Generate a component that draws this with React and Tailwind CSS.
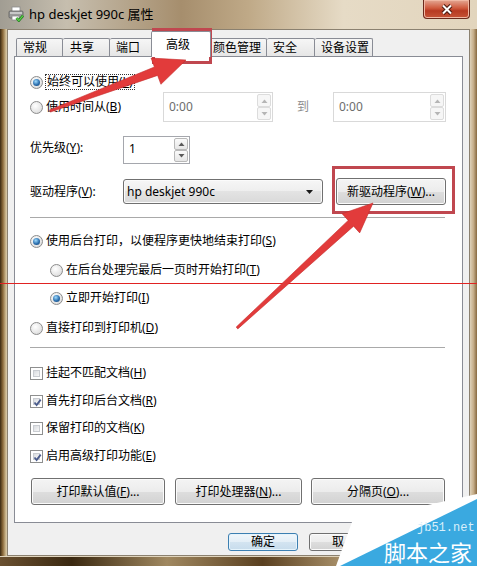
function Radio({ checked }) {
  return (
    <span className="w-[13px] h-[13px] shrink-0 rounded-full border border-[#8c8c8c] bg-[radial-gradient(circle_at_40%_35%,#ffffff,#e6e6e6_60%,#cfcfcf)] flex items-center justify-center">
      {checked && (
        <span className="w-[7px] h-[7px] rounded-full bg-[radial-gradient(circle_at_40%_35%,#9fdcff,#2c6fae_55%,#123f6e)]"></span>
      )}
    </span>
  );
}

function Check({ checked }) {
  return (
    <span className="relative w-[13px] h-[13px] shrink-0 border border-[#8e8f8f] bg-white p-[2px]">
      <span className="block w-full h-full border border-[#c9ccd1] bg-[linear-gradient(135deg,#d9dce0,#f7f7f7)]"></span>
      {checked && (
        <svg className="absolute left-[1px] top-[1px]" width="11" height="11" viewBox="0 0 11 11">
          <path d="M2.5 5.5 L4.6 8 L8.7 2.6" fill="none" stroke="#4a5b8c" strokeWidth="1.8" />
        </svg>
      )}
    </span>
  );
}

function SpinBtn({ up, disabled }) {
  return (
    <span
      className={
        "flex-1 flex items-center justify-center border rounded-[2px] " +
        (disabled ? "border-[#dcdcdc] bg-[#f6f6f6]" : "border-[#b8b8b8] bg-[linear-gradient(#fafafa,#e6e6e6)]")
      }
    >
      <svg width="7" height="4" viewBox="0 0 7 4">
        <path d={up ? "M0.5 4 L3.5 0.5 L6.5 4Z" : "M0.5 0 L3.5 3.5 L6.5 0Z"} fill={disabled ? "#b5b5b5" : "#5a5a5a"} />
      </svg>
    </span>
  );
}

function Spin({ value, disabled, className, textClass }) {
  return (
    <div
      className={
        "flex bg-white border " +
        (disabled ? "border-[#d9d9d9] text-[#6d6d6d] " : "border-[#a5a7ad] text-black ") +
        className
      }
    >
      <span className={"flex-1 pl-[5px] flex " + textClass}>{value}</span>
      <div className="w-[14px] flex flex-col py-[1px] mr-[1px]">
        <SpinBtn up disabled={disabled} />
        <SpinBtn disabled={disabled} />
      </div>
    </div>
  );
}

function Btn({ children, className }) {
  return (
    <div
      className={
        "flex items-center justify-center border border-[#707070] rounded-[3px] bg-[linear-gradient(#f4f4f4,#ececec_50%,#dedede_50%,#d2d2d2)] shadow-[inset_0_0_0_1px_#fbfbfb] " +
        className
      }
    >
      {children}
    </div>
  );
}

function PrinterIcon() {
  return (
    <svg width="16" height="16" viewBox="0 0 16 16">
      <rect x="4" y="1" width="8" height="5" fill="#fff" stroke="#8a8a8a" strokeWidth="0.8" />
      <rect x="1" y="5" width="14" height="7" rx="1.2" fill="#9a9a9a" stroke="#5e5e5e" strokeWidth="0.8" />
      <rect x="2" y="6" width="12" height="2" fill="#c8c8c8" />
      <rect x="4" y="10" width="7" height="4" fill="#fff" stroke="#8a8a8a" strokeWidth="0.8" />
      <path d="M8.5 12 L10.8 14.6 L15 9.6" fill="none" stroke="#1f7a1f" strokeWidth="2.6" />
      <path d="M8.5 12 L10.8 14.6 L15 9.6" fill="none" stroke="#5fd14a" strokeWidth="1.3" />
    </svg>
  );
}

export default function App() {
  return (
    <div className="relative w-[477px] h-[566px] overflow-hidden flex flex-col bg-[#d6c6a6] text-black text-[12px] leading-[16px] font-['Noto_Sans','Noto_Sans_CJK_SC',sans-serif]">
      {/* title bar */}
      <div className="h-[29px] shrink-0 flex items-start bg-[linear-gradient(90deg,#a19d93_0%,#c6beae_14%,#a68e6d_38%,#bfa987_52%,#e6dbc6_72%,#e2d5bd_100%)]">
        <div className="h-[28px] flex items-center pl-[8px]">
          <PrinterIcon />
          <span className="ml-[5px] text-[13px] text-black">hp deskjet 990c 属性</span>
        </div>
        <div className="ml-auto mr-[7px] w-[47px] h-[19px] flex items-center justify-center rounded-b-[4px] border border-t-0 border-[#6b2a1c] bg-[linear-gradient(#e4a894,#cf5a3e_45%,#b73a22_60%,#c65437)] shadow-[inset_0_0_0_1px_#f0b8a4]">
          <svg width="14" height="11" viewBox="0 0 14 11">
            <path d="M3 1.5 L11 9.5 M11 1.5 L3 9.5" stroke="#4a1a10" strokeWidth="4" />
            <path d="M3 1.5 L11 9.5 M11 1.5 L3 9.5" stroke="#ffffff" strokeWidth="2" />
          </svg>
        </div>
      </div>

      <div className="flex flex-1">
        {/* left frame */}
        <div className="w-[7px] bg-[linear-gradient(90deg,#3a2911,#8a693a_40%,#c8b389_80%,#d9cbae)]"></div>

        {/* client area */}
        <div className="flex-1 flex flex-col bg-[#f0f0f0] border border-[#8b8170] px-[6px]">
          {/* tabs */}
          <div className="h-[26px] flex items-end pl-[2px]">
            <div className="w-[47px] h-[18px] pl-[6px] pt-[1px] border border-b-0 border-[#898c95] rounded-t-[2px] bg-[linear-gradient(#f6f6f6,#e6e6e6)]">常规</div>
            <div className="w-[47px] h-[18px] pl-[7px] pt-[1px] border border-l-0 border-b-0 border-[#898c95] rounded-t-[2px] bg-[linear-gradient(#f6f6f6,#e6e6e6)]">共享</div>
            <div className="w-[43px] h-[18px] pl-[6px] pt-[1px] border border-l-0 border-b-0 border-[#898c95] rounded-t-[2px] bg-[linear-gradient(#f6f6f6,#e6e6e6)]">端口</div>
            <div className="relative z-10 w-[60px] -mx-[2px] -mb-px h-[26px] pl-[14px] pt-[5px] border border-b-0 border-[#898c95] rounded-t-[2px] bg-white">高级</div>
            <div className="w-[58px] h-[18px] pl-[4px] pt-[1px] border border-l-0 border-b-0 border-[#898c95] rounded-t-[2px] bg-[linear-gradient(#f6f6f6,#e6e6e6)]">颜色管理</div>
            <div className="w-[48px] h-[18px] pl-[6px] pt-[1px] border border-l-0 border-b-0 border-[#898c95] rounded-t-[2px] bg-[linear-gradient(#f6f6f6,#e6e6e6)]">安全</div>
            <div className="w-[58px] h-[18px] pl-[6px] pt-[1px] border border-l-0 border-b-0 border-[#898c95] rounded-t-[2px] bg-[linear-gradient(#f6f6f6,#e6e6e6)]">设备设置</div>
          </div>

          {/* tab panel */}
          <div className="h-[467px] shrink-0 border border-[#898c95] bg-white pl-[15px] flex flex-col">
            <div className="mt-[17px] h-[16px] flex items-center">
              <Radio checked />
              <span className="ml-[2px] border border-dotted border-[#333] px-[1px] leading-[14px]">始终可以使用(<u>L</u>)</span>
            </div>

            <div className="mt-[2px] h-[30px] flex items-center">
              <div className="w-[133px] flex items-center">
                <Radio />
                <span className="ml-[3px]">使用时间从(<u>B</u>)</span>
              </div>
              <Spin disabled value="0:00" className="w-[110px] h-[30px]" textClass="items-center" />
              <span className="ml-[24px] w-[12px] text-[#8d8d8d]">到</span>
              <Spin disabled value="0:00" className="ml-[24px] w-[113px] h-[30px]" textClass="items-center" />
            </div>

            <div className="mt-[14px] h-[28px] flex items-center">
              <span className="w-[93px] pb-[4px]">优先级(<u>Y</u>):</span>
              <Spin value="1" className="w-[67px] h-[28px]" textClass="items-start pt-[4px]" />
            </div>

            <div className="mt-[15px] h-[25px] flex items-center">
              <span className="w-[93px]">驱动程序(<u>V</u>):</span>
              <div className="w-[200px] h-[25px] flex items-center justify-between pl-[3px] pr-[9px] border border-[#707070] rounded-[3px] bg-[linear-gradient(#f6f6f6,#eeeeee_50%,#e3e3e3_50%,#d9d9d9)] shadow-[inset_0_0_0_1px_#fbfbfb]">
                <span>hp deskjet 990c</span>
                <svg width="7" height="4" viewBox="0 0 7 4">
                  <path d="M0 0 L7 0 L3.5 4Z" fill="#1a1a1a" />
                </svg>
              </div>
              <Btn className="ml-[13px] w-[110px] h-[27px]">新驱动程序(<u>W</u>)...</Btn>
            </div>

            <div className="mt-[13px] h-px w-[415px] bg-[#a9a9a9]"></div>

            <div className="mt-[15px] h-[16px] flex items-center">
              <Radio checked />
              <span className="ml-[3px]">使用后台打印，以便程序更快地结束打印(<u>S</u>)</span>
            </div>
            <div className="mt-[13px] h-[16px] flex items-center pl-[20px]">
              <Radio />
              <span className="ml-[3px]">在后台处理完最后一页时开始打印(<u>T</u>)</span>
            </div>
            <div className="mt-[12px] h-[16px] flex items-center pl-[20px]">
              <Radio checked />
              <span className="ml-[3px]">立即开始打印(<u>I</u>)</span>
            </div>
            <div className="mt-[14px] h-[16px] flex items-center">
              <Radio />
              <span className="ml-[3px]">直接打印到打印机(<u>D</u>)</span>
            </div>

            <div className="mt-[11px] h-px w-[415px] bg-[#a9a9a9]"></div>

            <div className="mt-[17px] h-[16px] flex items-center">
              <Check />
              <span className="ml-[3px]">挂起不匹配文档(<u>H</u>)</span>
            </div>
            <div className="mt-[12px] h-[16px] flex items-center">
              <Check checked />
              <span className="ml-[3px]">首先打印后台文档(<u>R</u>)</span>
            </div>
            <div className="mt-[11px] h-[16px] flex items-center">
              <Check />
              <span className="ml-[3px]">保留打印的文档(<u>K</u>)</span>
            </div>
            <div className="mt-[12px] h-[16px] flex items-center">
              <Check checked />
              <span className="ml-[3px]">启用高级打印功能(<u>E</u>)</span>
            </div>

            <div className="mt-[14px] h-[27px] flex">
              <Btn className="ml-[1px] w-[134px] h-[27px]">打印默认值(<u>F</u>)...</Btn>
              <Btn className="ml-[10px] w-[127px] h-[27px]">打印处理器(<u>N</u>)...</Btn>
              <Btn className="ml-[9px] w-[134px] h-[27px]">分隔页(<u>O</u>)...</Btn>
            </div>
          </div>

          {/* dialog buttons */}
          <div className="mt-[10px] h-[18px] flex">
            <div className="ml-[214px] w-[70px] h-[18px] flex items-center justify-center border border-[#3c7fb1] rounded-[3px] bg-[linear-gradient(#f1f7fb,#e3eef7_50%,#d3e4f1_50%,#c7dcec)] shadow-[inset_0_0_0_1px_#e6f4fc]">确定</div>
            <Btn className="ml-[11px] w-[70px] h-[18px] justify-start pl-[22px]">取</Btn>
          </div>
        </div>

        {/* right frame */}
        <div className="w-[7px] bg-[linear-gradient(90deg,#ded2ba,#c5ad89_50%,#86683f)]"></div>
      </div>

      {/* bottom frame */}
      <div className="h-[10px] shrink-0 border-t border-[#e0d4bc] bg-[linear-gradient(90deg,#6a5030,#3a2810_15%,#a08860_35%,#5a4020_55%,#b8a078_75%,#6e5536)]"></div>

      {/* annotations */}
      <div className="absolute left-0 top-[283px] w-full h-px bg-[#e02222]"></div>
      <div className="absolute left-[152px] top-[28px] w-[60px] h-[36px] border-[3px] border-[#c0474f]"></div>
      <div className="absolute left-[332px] top-[166px] w-[123px] h-[48px] border-[3px] border-[#c0474f]"></div>

      <svg className="absolute inset-0 pointer-events-none" width="477" height="566" viewBox="0 0 477 566">
        <polygon
          points="50.4,112.1 157.6,75.4 160.9,84.3 186,60 151.1,58.1 154.4,67.0 49.6,109.9"
          fill="#e23b3b"
          stroke="#c42a2a"
          strokeWidth="0.6"
        />
        <polygon
          points="237.8,328.9 353.6,226.2 359.7,232.9 373,203 342.1,213.7 348.2,220.4 236.2,327.1"
          fill="#e23b3b"
          stroke="#c42a2a"
          strokeWidth="0.6"
        />
        {/* watermark */}
        <polygon points="352,522 477,494 477,566 336,566" fill="#ffffff" />
        <polygon points="477,499 477,566 340,566" fill="#3aa9e0" />
      </svg>
      <div className="absolute left-[417px] top-[522px] whitespace-nowrap text-[12px] leading-[12px] text-[#d9effb] font-['Liberation_Mono',monospace]">jb51.net</div>
      <div className="absolute left-[384px] top-[537px] whitespace-nowrap text-[22px] leading-[28px] text-white font-['Noto_Sans_CJK_SC',sans-serif]">脚本之家</div>
    </div>
  );
}
